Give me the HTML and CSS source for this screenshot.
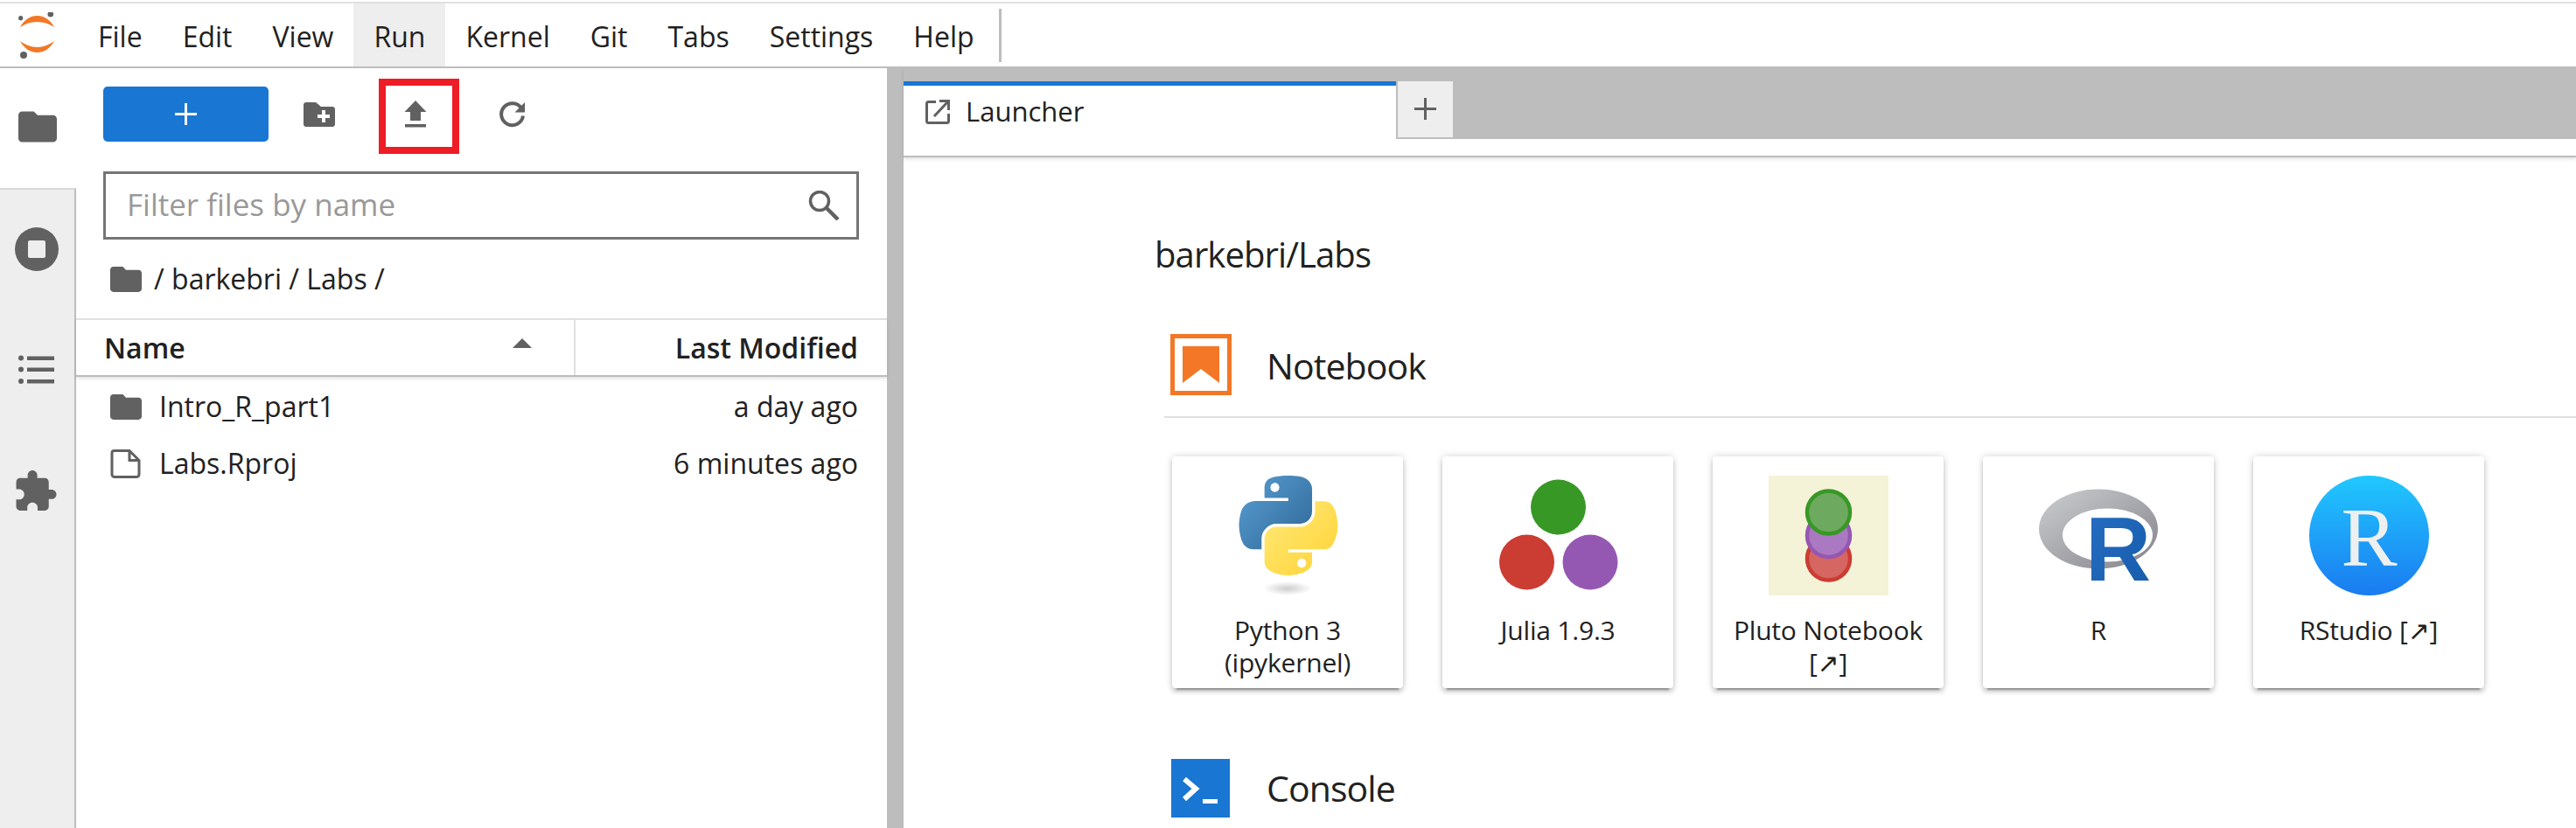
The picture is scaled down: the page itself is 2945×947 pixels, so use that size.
FILE: index.html
```html
<!DOCTYPE html>
<html lang="en">
<head>
<meta charset="utf-8">
<title>JupyterLab</title>
<link rel="stylesheet" href="styles.css">
</head>
<body>
<div class="top-rule"></div>
<header class="menubar">
  <svg class="logo" width="42" height="53" viewBox="21 13 42 53">
    <path fill="#f37726" d="M23 30C28 21 35 17 42.5 17S57 21 62 30C56 26 50 24 42.5 24S29 26 23 30Z"/>
    <path fill="#f37726" d="M23 46C29 50 35 53 42.5 53S56 50 62 46C57 55 50 59 42.5 59S28 55 23 46Z"/>
    <circle cx="23.7" cy="19.7" r="2.6" fill="#616161"/>
    <circle cx="57.8" cy="15.3" r="3.3" fill="#616161"/>
    <circle cx="27" cy="62" r="4" fill="#616161"/>
  </svg>
  <nav class="menu">
    <span class="menu-item m-file">File</span>
    <span class="menu-item m-edit">Edit</span>
    <span class="menu-item m-view">View</span>
    <span class="menu-item m-run">Run</span>
    <span class="menu-item m-kernel">Kernel</span>
    <span class="menu-item m-git">Git</span>
    <span class="menu-item m-tabs">Tabs</span>
    <span class="menu-item m-settings">Settings</span>
    <span class="menu-item m-help">Help</span>
  </nav>
  <div class="menu-sep"></div>
</header>
<div class="shell">
  <aside class="sidebar">
    <div class="side-tab side-active">
      <svg width="44" height="36" viewBox="2 4 20 16"><path fill="#616161" d="M10 4H4c-1.1 0-2 .9-2 2v12c0 1.1.9 2 2 2h16c1.1 0 2-.9 2-2V8c0-1.1-.9-2-2-2h-8l-2-2z"/></svg>
    </div>
    <div class="side-tab side-first">
      <svg width="50" height="50" viewBox="0 0 50 50"><circle cx="25" cy="25" r="25" fill="#616161"/><rect x="15" y="15" width="20" height="20" rx="2" fill="#eee"/></svg>
    </div>
    <div class="side-tab side-low">
      <svg width="42" height="34" viewBox="0 0 42 34"><g fill="#616161"><circle cx="3" cy="3.5" r="3"/><circle cx="3" cy="16.5" r="3"/><circle cx="3" cy="30" r="3"/><rect x="10" y="1.5" width="31" height="4.5"/><rect x="10" y="14.5" width="31" height="4.5"/><rect x="10" y="28" width="31" height="4.5"/></g></svg>
    </div>
    <div class="side-tab side-low">
      <svg width="47" height="46" viewBox="2 1 21 21"><path fill="#616161" d="M20.5 11H19V7c0-1.1-.9-2-2-2h-4V3.5C13 2.12 11.88 1 10.5 1S8 2.12 8 3.5V5H4c-1.1 0-1.99.9-1.99 2v3.8H3.5c1.49 0 2.7 1.21 2.7 2.7s-1.21 2.7-2.7 2.7H2V20c0 1.1.9 2 2 2h3.8v-1.5c0-1.49 1.21-2.7 2.7-2.7 1.49 0 2.7 1.21 2.7 2.7V22H17c1.1 0 2-.9 2-2v-4h1.5c1.38 0 2.5-1.12 2.5-2.5S21.88 11 20.5 11z"/></svg>
    </div>
    <div class="side-fill"></div>
  </aside>

  <section class="files">
    <div class="fb-toolbar">
      <button class="new-btn">
        <svg width="25" height="25" viewBox="0 0 25 25"><path fill="#fff" d="M11 0h3v11h11v3H14v11h-3V14H0v-3h11z"/></svg>
      </button>
      <svg class="tb-folder" width="36" height="28" viewBox="347 117 36 28"><path fill="#616161" d="M347 120c0-1.700 1.300-3 3-3h11l6 5h13c1.700 0 3 1.300 3 3v17c0 1.700-1.300 3-3 3h-30c-1.700 0-3-1.300-3-3z"/><path fill="#fff" d="M368 126h4v5h5v4h-5v5h-4v-5h-5v-4h5z"/></svg>
      <div class="upload-frame">
        <svg width="26" height="31" viewBox="462 115 26 31"><path fill="#616161" d="M475 115l12.500 13H481v10h-12v-10h-6.500zM463 142h24v3.500h-24z"/></svg>
      </div>
      <svg class="tb-refresh" width="30" height="30" viewBox="570 116 30 30"><path fill="none" stroke="#616161" stroke-width="4" d="M596.500 124.500a12.500 12.500 0 1 0 1.500 8"/><path fill="#616161" d="M600 117v11.500h-11.500z"/></svg>
    </div>

    <div class="filter">
      <span class="filter-text">Filter files by name</span>
      <svg width="36" height="34" viewBox="927 215 36 34"><circle cx="940" cy="227" r="10.500" fill="none" stroke="#616161" stroke-width="3.500"/><path stroke="#616161" stroke-width="4.500" d="M948 235l13 13"/></svg>
    </div>

    <div class="crumbs">
      <svg width="36" height="29" viewBox="2 4 20 16"><path fill="#616161" d="M10 4H4c-1.1 0-2 .9-2 2v12c0 1.1.9 2 2 2h16c1.1 0 2-.9 2-2V8c0-1.1-.9-2-2-2h-8l-2-2z"/></svg>
      <span class="crumb-text">/ barkebri / Labs /</span>
    </div>

    <div class="list-head">
      <div class="col-name">
        <span class="head-label">Name</span>
        <svg width="22" height="11" viewBox="0 0 22 11"><path fill="#616161" d="M11 0l11 11H0z"/></svg>
      </div>
      <div class="col-mod"><span class="head-label">Last Modified</span></div>
    </div>

    <div class="list">
      <div class="row">
        <svg width="36" height="29" viewBox="2 4 20 16"><path fill="#616161" d="M10 4H4c-1.1 0-2 .9-2 2v12c0 1.1.9 2 2 2h16c1.1 0 2-.9 2-2V8c0-1.1-.9-2-2-2h-8l-2-2z"/></svg>
        <span class="row-name">Intro_R_part1</span>
        <span class="row-date">a day ago</span>
      </div>
      <div class="row">
        <svg width="36" height="33" viewBox="0 0 36 33"><path fill="none" stroke="#616161" stroke-width="3" d="M4.500 1.500H22l11 11v16c0 1.700-1.300 3-3 3H5c-1.700 0-3-1.300-3-3V4c0-1.400 1.100-2.500 2.500-2.500zM22 1.500v11h11"/></svg>
        <span class="row-name">Labs.Rproj</span>
        <span class="row-date">6 minutes ago</span>
      </div>
    </div>
  </section>

  <div class="splitter"></div>

  <main class="main">
    <div class="tabbar">
      <div class="tab">
        <svg width="28" height="28" viewBox="0 0 28 28"><path fill="none" stroke="#616161" stroke-width="3" d="M12 2.500H3.500c-1.100 0-2 .9-2 2v20c0 1.100.9 2 2 2h21c1.100 0 2-.9 2-2V16"/><path fill="none" stroke="#616161" stroke-width="3" d="M10 19L25 3M16 1.500h10.500V12"/></svg>
        <span class="tab-label">Launcher</span>
      </div>
      <div class="tab-add">
        <svg width="25" height="25" viewBox="0 0 25 25"><path fill="#616161" d="M11 0h3v11h11v3H14v11h-3V14H0v-3h11z"/></svg>
      </div>
    </div>

    <div class="launcher">
      <div class="cwd">barkebri/Labs</div>

      <div class="section">
        <div class="section-head section-rule">
          <svg width="70" height="70" viewBox="0 0 70 70"><rect x="2.500" y="2.500" width="65" height="65" fill="#fff" stroke="#f37726" stroke-width="5"/><path fill="#f37726" d="M14 14H56V56L35 40 14 56Z"/></svg>
          <span class="section-title title-low">Notebook</span>
        </div>
        <div class="cards">
          <div class="card">
            <svg class="card-icon" width="137" height="137" viewBox="0 0 137 137">
              <defs>
                <linearGradient id="pyb" x1="0" y1="0" x2="1" y2="0.9"><stop offset="0" stop-color="#5a9fd4"/><stop offset="1" stop-color="#306998"/></linearGradient>
                <linearGradient id="pyy" x1="0.1" y1="0.1" x2="0.9" y2="0.9"><stop offset="0" stop-color="#ffe873"/><stop offset="1" stop-color="#ffd43b"/></linearGradient>
                <radialGradient id="pys"><stop offset="0" stop-color="#b8b8b8" stop-opacity=".7"/><stop offset="1" stop-color="#b8b8b8" stop-opacity="0"/></radialGradient>
              </defs>
              <g transform="translate(12.500 0) scale(1.015)">
                <path fill="url(#pyb)" d="M54.900 0C50.300 0 46 .4 42.100 1.100 30.800 3.100 28.700 7.300 28.700 15v10.200h26.800v3.400H18.600C10.800 28.700 4 33.300 1.900 42.200c-2.500 10.200-2.500 16.600 0 27.200 1.900 7.900 6.500 13.600 14.200 13.600h9.300V70.800c0-8.800 7.700-16.700 16.700-16.700h26.800c7.500 0 13.400-6.100 13.400-13.600V15c0-7.300-6.100-12.700-13.400-13.900C64.300.3 59.500 0 54.900 0zM40.400 8.200c2.800 0 5 2.300 5 5.100 0 2.800-2.200 5.100-5 5.100s-5-2.300-5-5.100c0-2.800 2.200-5.100 5-5.100z"/>
                <path fill="url(#pyy)" d="M85.600 28.700v11.900c0 9.200-7.800 17-16.700 17H42.100c-7.300 0-13.400 6.300-13.400 13.600v25.500c0 7.300 6.300 11.500 13.400 13.600 8.500 2.500 16.600 2.900 26.800 0 6.700-2 13.400-5.900 13.400-13.600V86.500H55.500v-3.400h40.200c7.800 0 10.700-5.400 13.400-13.600 2.800-8.400 2.700-16.500 0-27.200-1.900-7.700-5.600-13.600-13.400-13.600zM70.600 93.300c2.800 0 5 2.300 5 5.100 0 2.900-2.200 5.200-5 5.200s-5-2.300-5-5.200c0-2.800 2.200-5.100 5-5.100z"/>
              </g>
              <ellipse cx="68" cy="129" rx="28" ry="8" fill="url(#pys)"/>
            </svg>
            <div class="card-label">Python 3 (ipykernel)</div>
          </div>
          <div class="card">
            <svg class="card-icon" width="137" height="137" viewBox="1712 544 137 137"><circle cx="1780.500" cy="580" r="31.500" fill="#389826"/><circle cx="1744.500" cy="643" r="31.500" fill="#cb3c33"/><circle cx="1817" cy="643" r="31.500" fill="#9558b2"/></svg>
            <div class="card-label">Julia 1.9.3</div>
          </div>
          <div class="card">
            <svg class="card-icon pluto" width="137" height="137" viewBox="0 0 137 137"><g stroke-width="4.500"><circle cx="68.500" cy="95" r="24.500" fill="#d66661" stroke="#cb3c33"/><circle cx="68.500" cy="68.500" r="24.500" fill="#aa79c1" stroke="#9558b2"/><circle cx="68.500" cy="42" r="24.500" fill="#6daa5f" stroke="#389826"/></g></svg>
            <div class="card-label">Pluto Notebook [↗]</div>
          </div>
          <div class="card">
            <svg class="card-icon r-logo" width="137" height="137" viewBox="2330 544 137 137">
              <defs>
                <linearGradient id="rg" x1="0" y1="0" x2="1" y2="1"><stop offset="0" stop-color="#cbced0"/><stop offset="1" stop-color="#84838b"/></linearGradient>
                <linearGradient id="rb" x1="0" y1="0" x2="1" y2="1"><stop offset="0" stop-color="#276dc3"/><stop offset="1" stop-color="#165caa"/></linearGradient>
              </defs>
              <path fill="url(#rg)" fill-rule="evenodd" d="M2330 605a68 45.500 0 1 0 136 0a68 45.500 0 1 0-136 0zM2357 612a51.500 30.500 0 1 1 103 0a51.500 30.500 0 1 1-103 0z"/>
              <text x="2383" y="664" class="r-mark" fill="url(#rb)">R</text>
            </svg>
            <div class="card-label">R</div>
          </div>
          <div class="card">
            <svg class="card-icon" width="137" height="137" viewBox="0 0 137 137">
              <defs><linearGradient id="rs" x1="0" y1="0" x2="0" y2="1"><stop offset="0" stop-color="#21c8ff"/><stop offset="1" stop-color="#1a7bf0"/></linearGradient></defs>
              <circle cx="68.500" cy="68.500" r="68.500" fill="url(#rs)"/>
              <text x="68.500" y="103" class="rs-mark">R</text>
            </svg>
            <div class="card-label">RStudio [↗]</div>
          </div>
        </div>
      </div>

      <div class="section-head console-head">
        <svg width="70" height="67" viewBox="-1 0 70 67"><rect width="67" height="67" fill="#1976d2"/><path fill="none" stroke="#fff" stroke-width="6" d="M15 23l13 11-13 12"/><rect x="36" y="46" width="17" height="5" fill="#fff"/></svg>
        <span class="section-title">Console</span>
      </div>
    </div>
  </main>
</div>
</body>
</html>
```

FILE: styles.css
```css
* { box-sizing: border-box; }
html, body { margin: 0; height: 947px; overflow: hidden; background: #fff; }
body {
  font-family: "Open Sans", "Noto Sans", "DejaVu Sans", sans-serif;
  font-size: 32px;
  color: #212121;
}
svg { display: block; flex: none; }

.top-rule { height: 2px; margin-top: 2px; background: #e0e0e0; }

.menubar {
  display: flex;
  align-items: center;
  height: 74px;
  border-bottom: 2px solid #bdbdbd;
}
.logo { margin-left: 21px; }
.menu { display: flex; align-self: stretch; margin-left: 26px; }
.menu-item {
  display: flex;
  align-items: center;
  padding: 2px 23px 0;
  height: 72px;
}
.m-run { background: #eee; }
.menu-sep { width: 3px; height: 61px; margin-left: 5px; background: #bdbdbd; }

.shell { display: flex; height: 869px; }

.sidebar { display: flex; flex-direction: column; width: 87px; flex: none; }
.side-tab {
  display: flex;
  align-items: center;
  justify-content: center;
  height: 138px;
  padding-right: 2px;
  background: #eee;
  border-right: 2px solid #bdbdbd;
}
.side-active { background: #fff; border-right: 0; height: 137px; padding: 0 2px 3px 0; }
.side-first { border-top: 2px solid #d8d8d8; }
.side-low { padding-top: 2px; }
.side-fill { flex: 1; background: #eee; border-right: 2px solid #bdbdbd; }

.files { width: 927px; flex: none; }
.fb-toolbar { display: flex; align-items: flex-start; padding: 12px 0 0 31px; height: 98px; margin-bottom: 20px; }
.new-btn {
  display: flex;
  align-items: center;
  justify-content: center;
  width: 189px;
  height: 63px;
  margin-top: 9px;
  padding: 0;
  border: 0;
  border-radius: 5px;
  background: #1976d2;
}
.tb-folder { margin: 27px 0 0 40px; }
.upload-frame {
  display: flex;
  justify-content: center;
  width: 92px;
  height: 86px;
  margin-left: 50px;
  padding: 17px 8px 0 0;
  border: 8px solid #ee1c25;
}
.tb-refresh { margin: 26px 0 0 45px; }

.filter {
  display: flex;
  align-items: center;
  justify-content: space-between;
  width: 864px;
  height: 78px;
  margin-left: 31px;
  padding: 0 19px 0 24px;
  border: 3px solid #757575;
}
.filter-text { font-size: 35px; color: #999; margin-top: -4px; }

.crumbs { display: flex; align-items: center; gap: 14px; height: 90px; padding-left: 39px; }
.crumb-text { margin-top: -2px; }

.list-head {
  position: relative;
  display: flex;
  height: 67px;
  border-top: 2px solid #e0e0e0;
  border-bottom: 2px solid #bdbdbd;
  box-shadow: 0 2px 4px rgba(0, 0, 0, .12);
}
.col-name {
  display: flex;
  align-items: center;
  justify-content: space-between;
  width: 571px;
  padding: 0 48px 0 32px;
  border-right: 2px solid #e0e0e0;
}
.col-name svg { margin-top: -11px; }
.col-mod { display: flex; align-items: center; justify-content: flex-end; flex: 1; padding-right: 33px; }
.head-label { font-weight: 600; }

.list { padding-top: 2px; }
.row { display: flex; align-items: center; height: 65px; padding: 0 33px 0 39px; }
.row-name { margin: -2px 0 0 20px; flex: 1; }
.row-date { margin-top: -2px; }

.splitter { width: 19px; flex: none; background: #bdbdbd; }

.main { flex: 1; min-width: 0; }
.tabbar {
  position: relative;
  display: flex;
  align-items: flex-start;
  height: 102px;
  padding-top: 15px;
  background: linear-gradient(#bdbdbd 81px, #fff 81px);
  border-bottom: 2px solid #bdbdbd;
  box-shadow: 0 2px 4px rgba(0, 0, 0, .12);
}
.tab {
  display: flex;
  align-items: center;
  gap: 18px;
  width: 563px;
  height: 85px;
  padding: 0 0 21px 25px;
  background: #fff;
  border-top: 5px solid #1976d2;
  font-size: 31px;
}
.tab-label { margin-top: -2px; }
.tab-add {
  display: flex;
  align-items: center;
  justify-content: center;
  width: 65px;
  height: 66px;
  padding-bottom: 2px;
  background: #eee;
  border-left: 2px solid #bdbdbd;
  border-bottom: 2px solid #bdbdbd;
}

.launcher { padding: 86px 0 0 287px; }
.cwd { font-size: 40px; line-height: 52px; letter-spacing: -0.9px; margin-top: -1px; }
.section { margin: 65px 0 0 11px; }
.section-head { display: flex; align-items: center; gap: 40px; padding-left: 7px; }
.section-rule { padding-bottom: 24px; border-bottom: 2px solid #e0e0e0; }
.section-title { font-size: 41px; line-height: 70px; letter-spacing: -0.9px; }
.title-low { padding-top: 2px; line-height: 68px; }
.cards { display: flex; gap: 45px; margin: 44px 0 0 9px; }
.card {
  width: 264px;
  height: 265px;
  padding: 22px 0 0;
  flex: none;
  background: #fff;
  border-radius: 4px;
  box-shadow: 0 7px 2px -5px rgba(0, 0, 0, .3), 0 5px 5px 0 rgba(0, 0, 0, .14), 0 0 9px 0 rgba(0, 0, 0, .18);
}
.card-icon { margin: 0 auto; }
.pluto { background: #f5f3d7; }
.r-logo { overflow: visible; }
.card-label {
  margin-top: 21px;
  padding: 0 10px;
  font-size: 30px;
  line-height: 37px;
  text-align: center;
  letter-spacing: -0.2px;
}
.r-mark { font-family: "Liberation Sans", sans-serif; font-weight: 700; font-size: 104px; letter-spacing: 0; }
.rs-mark { font-family: "Liberation Serif", serif; font-size: 96px; fill: #eef0f0; text-anchor: middle; letter-spacing: 0; }
.console-head { margin: 79px 0 0 18px; padding-left: 0; }
```
